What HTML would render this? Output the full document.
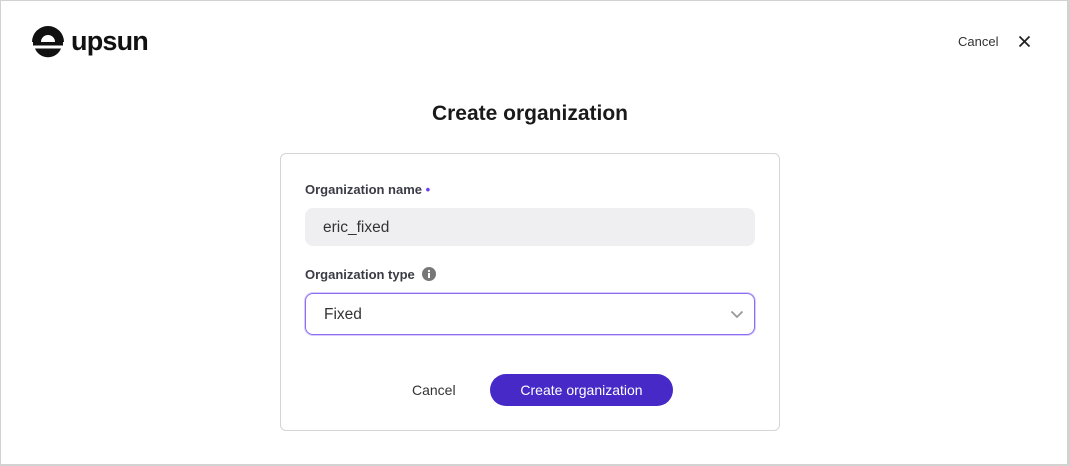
<!DOCTYPE html>
<html><head><style>
*{box-sizing:border-box;margin:0;padding:0}
body{width:1070px;height:466px;background:#fff;font-family:"Liberation Sans",sans-serif;color:#1a1a1a;overflow:hidden}
.frame{position:absolute;left:0;top:0;width:1070px;height:466px;border:1px solid #d2d2d2;border-right:3px solid #d2d2d2;border-bottom:2px solid #d2d2d2}
.abs{position:absolute}
.card{position:absolute;left:280px;top:153px;width:500px;height:278px;border:1px solid #d5d5d8;border-radius:6px}
.lbl{position:absolute;left:305px;font-size:13px;font-weight:bold;color:#3b3b45}
.inp{position:absolute;left:305px;width:450px;border-radius:8px;font-size:15.5px;color:#333;padding-left:18px}
</style></head><body>
<div class="frame"></div>
<svg class="abs" style="left:0;top:0" width="80" height="70" viewBox="0 0 80 70">
<path d="M32,42 A16,16 0 0 1 64,42 L55,42 A7,7 0 0 0 41,42 Z" fill="#111"/>
<rect x="33" y="42" width="30" height="3.5" fill="#111"/>
<path d="M35,48.5 L61,48.5 A14,14 0 0 1 35,48.5 Z" fill="#111"/>
</svg>
<div class="abs" style="left:71px;top:26px;font-size:27px;font-weight:bold;letter-spacing:-0.8px;color:#111">upsun</div>
<div class="abs" style="left:958px;top:34px;font-size:13px;color:#333">Cancel</div>
<svg class="abs" style="left:1018px;top:35px" width="13" height="13" viewBox="0 0 13 13"><path d="M1.5,1.5 L11.5,11.5 M11.5,1.5 L1.5,11.5" stroke="#222" stroke-width="1.8"/></svg>
<div class="abs" style="left:0;width:1060px;text-align:center;top:102px;font-size:21px;font-weight:bold;color:#1a1a1a">Create organization</div>
<div class="card"></div>
<div class="lbl" style="top:182px">Organization name <span style="color:#6a40f0">•</span></div>
<div class="inp" style="top:208px;height:38px;line-height:40px;background:#efeff2">eric_fixed</div>
<div class="lbl" style="top:267px">Organization type</div>
<svg class="abs" style="left:422px;top:267px" width="14" height="14" viewBox="0 0 14 14"><circle cx="7" cy="7" r="7" fill="#777"/><rect x="6" y="6" width="2" height="5" fill="#fff"/><circle cx="7" cy="4" r="1.1" fill="#fff"/></svg>
<div class="inp" style="top:293px;height:42px;line-height:42px;border:1.5px solid #8a6cf5;box-shadow:0 0 0 1px #d8ccfc">Fixed</div>
<svg class="abs" style="left:730px;top:310px" width="14" height="9" viewBox="0 0 14 9"><path d="M1.5,1.5 L7,7 L12.5,1.5" stroke="#999" stroke-width="1.8" fill="none"/></svg>
<div class="abs" style="left:412px;top:382px;font-size:14px;color:#333">Cancel</div>
<div class="abs" style="left:490px;top:374px;width:183px;height:32px;border-radius:16px;background:#4629c6;color:#fff;font-size:14px;text-align:center;line-height:32px">Create organization</div>
</body></html>
